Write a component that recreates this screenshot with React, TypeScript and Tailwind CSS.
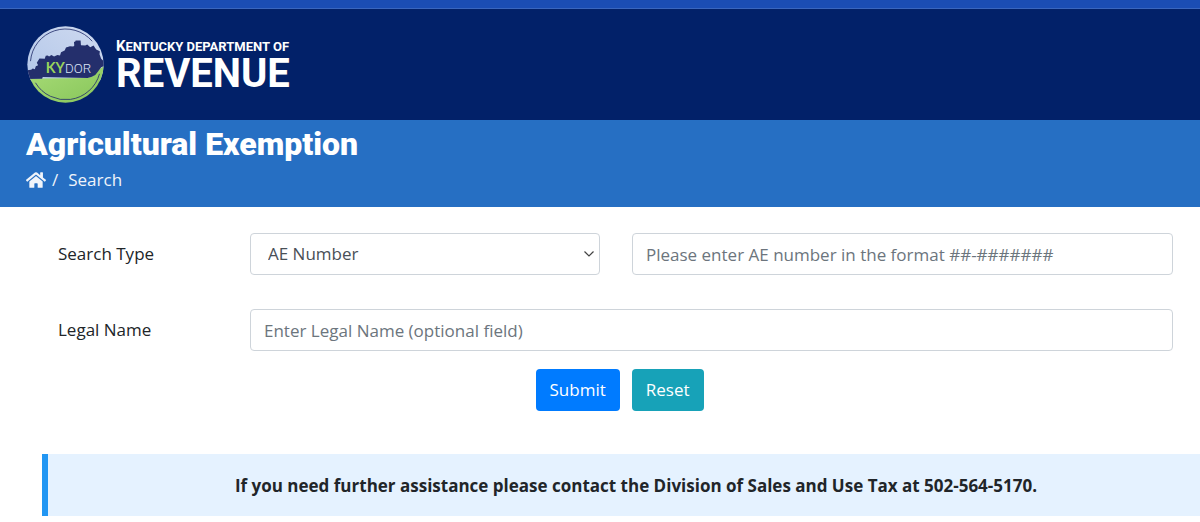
import { FaHome } from "react-icons/fa";

const field =
  "h-[42px] w-full rounded border border-[#ced4da] bg-white text-[17px] text-[#495057] placeholder:text-[#6c757d] placeholder:opacity-100";

function Seal() {
  return (
    <svg viewBox="23 17 231 232" className="size-[77px] shrink-0" role="img" aria-label="KYDOR">
      <defs>
        <linearGradient id="sky" x1="0" y1="1" x2="1" y2="0">
          <stop offset="0" stopColor="#b3c7e9" />
          <stop offset="1" stopColor="#cfdaf0" />
        </linearGradient>
        <linearGradient id="grass" x1="0" y1="0" x2="1" y2="1">
          <stop offset="0" stopColor="#a9dc78" />
          <stop offset="1" stopColor="#86c559" />
        </linearGradient>
        <clipPath id="disc">
          <circle cx="138.5" cy="133" r="115" />
        </clipPath>
      </defs>
      <g clipPath="url(#disc)">
        <rect x="20" y="14" width="240" height="170" fill="url(#sky)" />
        <path d="M20 175H68L205 174L222 168L240 148L260 134V255H20Z" fill="url(#grass)" />
        <path
          d="M22 150L35 149L40 145L46 147L49 138L56 135L52 128L60 115L76 116L79 107L85 106L89 109L96 104L104 109L114 104L122 106L125 96L136 91L140 82L152 78L162 79L165 76L164 65L168 64L169 61L184 61L185 75L198 76L204 73L213 81L223 76L231 88L242 93L241 102L246 116L256 125V137L246 141L236 155L228 165L218 170L205 174L70 171L68 176L22 177Z"
          fill="#242f6c"
        />
      </g>
      <g fill="none" stroke="#242f6c" strokeWidth="2.500">
        <path d="M33 123A106 106 0 0 1 219 63" />
        <path d="M48 188A106 106 0 0 0 241 161" />
      </g>
      <g fontSize="43">
        <text x="79" y="158" fill="#9ad45c" fontFamily="Lato, sans-serif" fontWeight="700">KY</text>
        <text x="137" y="158" fill="#dbe4f6" fontFamily="Roboto, sans-serif" fontWeight="300" fontSize="40">DOR</text>
      </g>
    </svg>
  );
}

export default function App() {
  return (
    <div className="min-h-screen bg-white font-['Open_Sans','Noto_Sans',sans-serif] text-[17px] text-[#212529]">
      <div className="h-[9px] border-b border-[#3a66bd] bg-[#1b4db3]" />
      <header className="flex h-[111px] items-center bg-[#022169] px-[27px]">
        <a href="#" className="flex items-center gap-3 font-['Roboto',sans-serif] font-bold text-white">
          <Seal />
          <span className="flex flex-col pt-0.5">
            <span className="text-[13px] leading-4 uppercase">
              <span className="text-[15px]">K</span>entucky department of
            </span>
            <span className="text-[40px] leading-[38px]">REVENUE</span>
          </span>
        </a>
      </header>
      <section className="h-[87px] bg-[#266fc3] px-[26px] pt-1 text-white">
        <h1 className="font-['Roboto',sans-serif] text-[32px] leading-10 font-black">Agricultural Exemption</h1>
        <nav aria-label="Breadcrumb" className="flex items-center pt-0.5 leading-7 text-[#f0f4fa]">
          <a href="#" aria-label="Home">
            <FaHome className="size-5" />
          </a>
          <span className="pl-1.5">/</span>
          <span className="pl-2.5">Search</span>
        </nav>
      </section>
      <main>
        <form className="pt-[26px] pr-[27px] pl-[58px]" onSubmit={(e) => e.preventDefault()}>
          <div className="flex items-center">
            <label htmlFor="type" className="w-48 shrink-0">Search Type</label>
            <div className="grid grow grid-cols-[350fr_541fr] gap-8">
              <div className="relative">
                <select id="type" className={`${field} appearance-none pr-8 pl-[17px]`}>
                  <option>AE Number</option>
                </select>
                <svg
                  viewBox="0 0 10 6"
                  className="pointer-events-none absolute top-[18px] right-1.5 h-1.5 w-2.5"
                  fill="none"
                  stroke="#444"
                  strokeWidth="1.2"
                >
                  <path d="M.5 .5L5 5L9.500 .5" />
                </svg>
              </div>
              <input
                aria-label="AE number"
                className={`${field} px-[13px]`}
                placeholder="Please enter AE number in the format ##-#######"
              />
            </div>
          </div>
          <div className="mt-[34px] flex items-center">
            <label htmlFor="name" className="w-48 shrink-0">Legal Name</label>
            <input id="name" className={`${field} px-[13px]`} placeholder="Enter Legal Name (optional field)" />
          </div>
          <div className="mt-[18px] flex justify-center gap-3 pl-2">
            <button type="submit" className="h-[42px] rounded bg-[#007bff] px-3.5 text-white">Submit</button>
            <button type="reset" className="h-[42px] rounded bg-[#17a2b8] px-3.5 text-white">Reset</button>
          </div>
        </form>
        <p className="mt-[43px] ml-[42px] border-l-[6px] border-[#2196f3] bg-[#e5f2ff] pt-[17px] pb-[15px] pl-6 text-center leading-[30px] font-bold">
          If you need further assistance please contact the Division of Sales and Use Tax at 502-564-5170.
        </p>
      </main>
    </div>
  );
}
